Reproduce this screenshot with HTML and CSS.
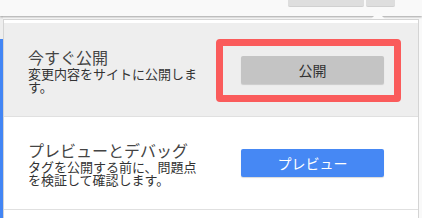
FILE: index.html
```html
<!DOCTYPE html>
<html lang="ja">
<head>
<meta charset="utf-8">
<title>公開</title>
<link rel="stylesheet" href="styles.css">
</head>
<body>
	<div id="topbar">
		<span class="tab wide"></span>
		<span class="tab"></span>
	</div>
	<div id="page">
		<div id="nav"><div class="nav-active"></div></div>
		<div id="panel">
			<span class="caret"></span>
			<div class="item selected">
				<div class="info">
					<div class="title">今すぐ公開</div>
					<div class="desc">変更内容をサイトに公開します。</div>
				</div>
				<button class="btn grey">公開</button>
				<span class="highlight"></span>
			</div>
			<div class="item">
				<div class="info">
					<div class="title">プレビューとデバッグ</div>
					<div class="desc">タグを公開する前に、問題点を検証して確認します。</div>
				</div>
				<button class="btn blue">プレビュー</button>
			</div>
		</div>
	</div>
</body>
</html>
```

FILE: styles.css
```css
body {
	margin: 0;
	background: #f9f9f9;
	font-family: "Noto Sans CJK JP", "Noto Sans", sans-serif;
	color: #333;
	overflow: hidden;
}

#topbar {
	height: 16px;
	background: #f9f9f9;
	box-shadow: 0 1px 2px rgba(0, 0, 0, 0.35);
	display: flex;
	justify-content: flex-end;
	gap: 2px;
	padding-right: 27px;
	position: relative;
	z-index: 1;
}

.tab {
	width: 29px;
	height: 6px;
	background: #dedede;
	border-bottom: 1px solid #d0d0d0;
	border-radius: 0 0 2px 2px;
}
.tab.wide {width: 76px;}

#page {
	display: flex;
	padding-top: 3px;
}

#nav {
	width: 3px;
	background: #eeeeee;
	margin-top: -3px;
	padding-top: 23px;
}
.nav-active {
	height: 179px;
	background: #4285f4;
}

#panel {
	position: relative;
	width: 414px;
	border: 1px solid #d4d4d4;
	border-bottom: none;
	background: #fff;
	padding-top: 3px;
}

.caret {
	position: absolute;
	left: 367px;
	top: -8px;
	border-left: 7px solid transparent;
	border-right: 7px solid transparent;
	border-bottom: 7px solid #fafafa;
	z-index: 2;
}

.item {
	position: relative;
	height: 92px;
	border-bottom: 1px solid #e0e0e0;
	display: flex;
	align-items: center;
	padding-left: 24px;
	gap: 33px;
}
.item.selected {
	height: 93px;
	background: #eeeeee;
}

.info {width: 180px;}

.title {
	font-size: 16px;
	line-height: 20px;
	color: #444;
}

.desc {
	font-size: 13px;
	line-height: 13px;
	color: #333;
}

.btn {
	width: 143px;
	height: 28px;
	border: none;
	border-radius: 2px;
	font-family: inherit;
	font-size: 14px;
	box-shadow: 0 1px 1px rgba(0, 0, 0, 0.15);
}
.btn.grey {background: #c4c4c4; color: #333;}
.btn.blue {background: #4688f4; color: #fff;}

.highlight {
	position: absolute;
	left: 212px;
	top: 16px;
	width: 185px;
	height: 63px;
	box-sizing: border-box;
	border: 7px solid #fa5b5b;
	border-radius: 4px;
}
```
